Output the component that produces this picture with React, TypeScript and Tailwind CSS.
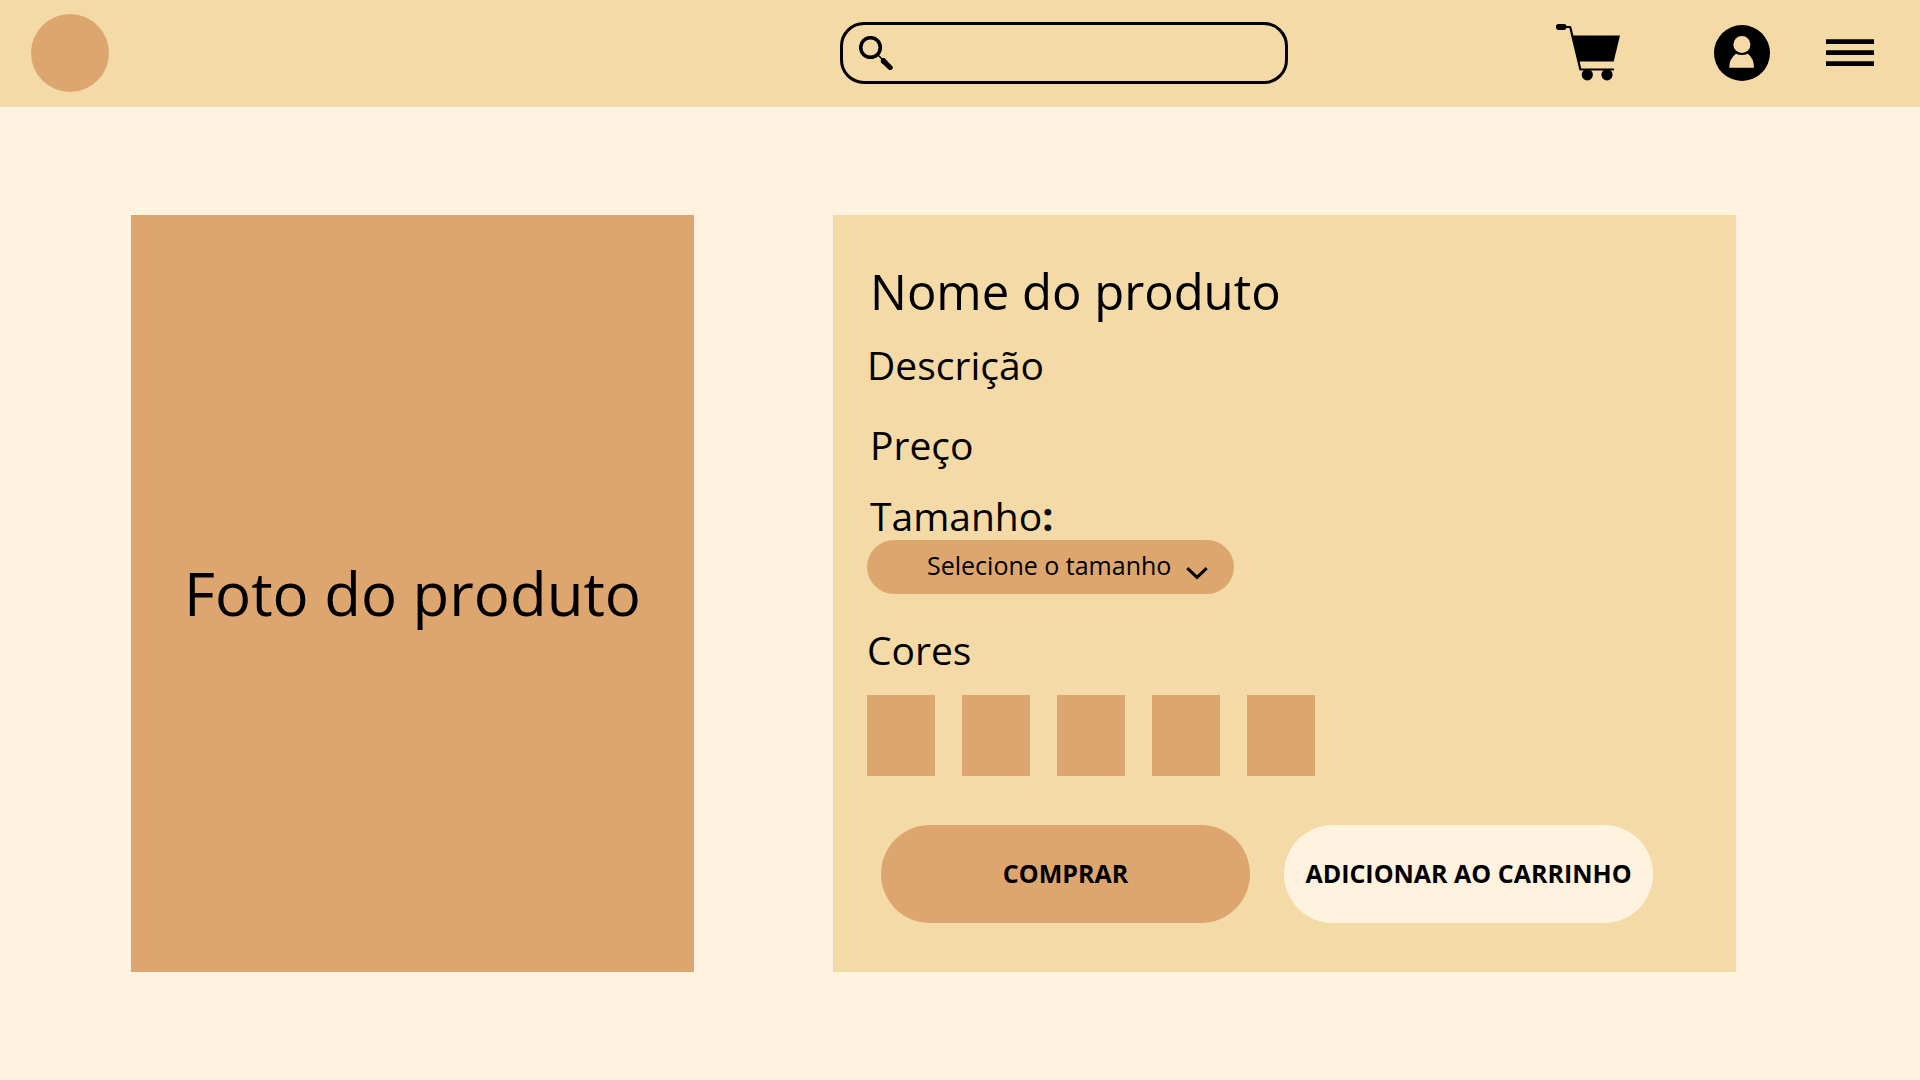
import React from "react";

const swatches = ["Cor 1", "Cor 2", "Cor 3", "Cor 4", "Cor 5"];

function SearchIcon() {
  return (
    <svg viewBox="0 0 34 34" className="h-[34px] w-[34px] shrink-0" aria-hidden="true">
      <circle cx="11.5" cy="11.5" r="9.8" fill="none" stroke="#000" strokeWidth="3.6" />
      <path d="M19 19l4 4" stroke="#000" strokeWidth="1.6" />
      <path d="M24.6 25.2l6.5 6.3" stroke="#000" strokeWidth="5.2" strokeLinecap="round" />
      <path d="M22 22h3.4l3 3-5 3-1.6-2z" fill="#000" />
    </svg>
  );
}

function CartIcon() {
  return (
    <svg viewBox="0 0 64 57" className="h-[57px] w-16" aria-hidden="true">
      <rect x="0" y="0" width="10.5" height="6" rx="2.4" />
      <path d="M9 3h5.2l10.2 42.5H58" fill="none" stroke="#000" strokeWidth="2.2" strokeLinejoin="round" />
      <path d="M15.5 11.6H64L57.7 37.6H22.6z" />
      <circle cx="31.3" cy="50.8" r="5.6" />
      <circle cx="51" cy="50.8" r="5.6" />
    </svg>
  );
}

function UserIcon() {
  return (
    <svg viewBox="0 0 56 56" className="h-14 w-14" aria-hidden="true">
      <circle cx="28" cy="28" r="28" />
      <circle cx="27.9" cy="19.4" r="8.5" fill="#f4daa6" />
      <path d="M22 28.8q5.9 2.6 11.8 0Q40 33.5 40 42.8H15.2Q15.4 33.5 22 28.8z" fill="#f4daa6" />
    </svg>
  );
}

function MenuIcon() {
  return (
    <svg viewBox="0 0 48 28" className="h-7 w-12" aria-hidden="true">
      <path d="M0 2.6h48M0 13.6h48M0 24.6h48" stroke="#000" strokeWidth="4.6" />
    </svg>
  );
}

function Header() {
  return (
    <header className="grid h-[107px] grid-cols-[809fr_448fr_586fr] items-center bg-[#f4daa6] pr-[46px] pb-0.5 pl-[31px]">
      <a href="#inicio" aria-label="Início" className="h-[78px] w-[78px] rounded-full bg-[#dda66e]" />
      <label className="flex h-[62px] items-center rounded-[24px] border-3 border-black pl-4">
        <SearchIcon />
        <input type="search" aria-label="Buscar" className="h-full min-w-0 flex-1 bg-transparent px-4 text-[25px] outline-none" />
      </label>
      <nav className="flex items-center justify-end">
        <button type="button" aria-label="Carrinho" className="mr-[94px]">
          <CartIcon />
        </button>
        <button type="button" aria-label="Conta" className="mr-14">
          <UserIcon />
        </button>
        <button type="button" aria-label="Menu">
          <MenuIcon />
        </button>
      </nav>
    </header>
  );
}

function SizeSelect() {
  return (
    <div className="relative -mt-px h-[54px] w-[367px]">
      <select
        id="tamanho"
        className="block h-full w-full appearance-none rounded-full bg-[#dda66e] pb-1 pl-[60px] text-[25px] text-black"
      >
        <option>Selecione o tamanho</option>
      </select>
      <svg viewBox="0 0 22 14" className="pointer-events-none absolute right-[26px] bottom-3.5 h-3.5 w-[22px]" aria-hidden="true">
        <path d="M1.3 2.2L11 11.4l9.7-9.2" fill="none" stroke="#000" strokeWidth="3" />
      </svg>
    </div>
  );
}

function ProductDetails() {
  return (
    <section className="bg-[#f4daa6] pt-[41px] pb-[49px] pl-[34px] text-[39px] leading-[50px]">
      <h1 className="pl-[3px] text-[49px] leading-[70px]">Nome do produto</h1>
      <p className="mt-3.5">Descrição</p>
      <p className="mt-[30px] pl-[3px]">Preço</p>
      <label htmlFor="tamanho" className="mt-[21px] block pl-[3px]">
        Tamanho<span className="font-bold">:</span>
      </label>
      <SizeSelect />
      <h2 className="mt-[31px]">Cores</h2>
      <div className="mt-5 flex gap-[27px]">
        {swatches.map((name) => (
          <button key={name} type="button" aria-label={name} className="h-[81px] w-[68px] bg-[#dda66e]" />
        ))}
      </div>
      <div className="mt-[49px] flex gap-[34px] pl-3.5 text-[25px] font-bold">
        <button type="button" className="h-[98px] w-[369px] rounded-full bg-[#dda66e] pb-0.5">
          COMPRAR
        </button>
        <button type="button" className="h-[98px] w-[369px] rounded-full bg-[#fff3e0] pb-0.5 whitespace-nowrap">
          ADICIONAR AO CARRINHO
        </button>
      </div>
    </section>
  );
}

export default function App() {
  return (
    <div className="min-h-screen bg-[#fff3e0] font-['Open_Sans',sans-serif] text-black">
      <Header />
      <main className="grid grid-cols-[563fr_903fr] gap-[139px] pt-[108px] pr-[184px] pb-[108px] pl-[131px]">
        <figure className="flex items-center justify-center bg-[#dda66e] pb-0.5 text-[60px]">
          <figcaption>Foto do produto</figcaption>
        </figure>
        <ProductDetails />
      </main>
    </div>
  );
}
